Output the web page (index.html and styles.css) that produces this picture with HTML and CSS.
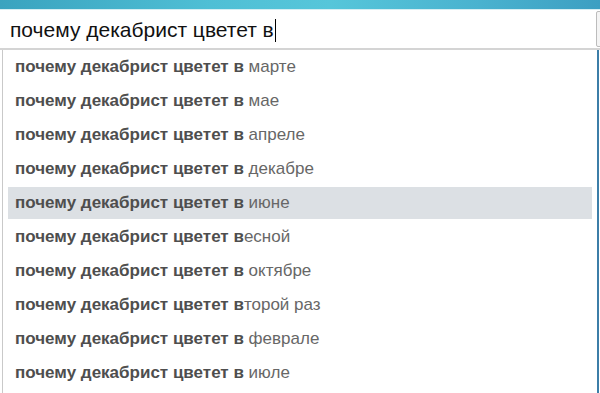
FILE: index.html
```html
<!DOCTYPE html>
<html lang="ru">
<head>
<meta charset="utf-8">
<link rel="stylesheet" href="styles.css">
</head>
<body>
<div class="topbar"></div>
<div class="search">
  <div class="query">почему декабрист цветет в<span class="caret"></span></div>
  <div class="btn"></div>
</div>
<div class="dropdown">
  <ul class="list">
    <li class="item"><b>почему декабрист цветет в</b> марте</li>
    <li class="item"><b>почему декабрист цветет в</b> мае</li>
    <li class="item"><b>почему декабрист цветет в</b> апреле</li>
    <li class="item"><b>почему декабрист цветет в</b> декабре</li>
    <li class="item active"><b>почему декабрист цветет в</b> июне</li>
    <li class="item"><b>почему декабрист цветет в</b>есной</li>
    <li class="item"><b>почему декабрист цветет в</b> октябре</li>
    <li class="item"><b>почему декабрист цветет в</b>торой раз</li>
    <li class="item"><b>почему декабрист цветет в</b> феврале</li>
    <li class="item"><b>почему декабрист цветет в</b> июле</li>
  </ul>
  <div class="edge"></div>
</div>
</body>
</html>
```

FILE: styles.css
```css
html, body {
  margin: 0;
  padding: 0;
  width: 600px;
  height: 393px;
  overflow: hidden;
  background: #fff;
  font-family: "Liberation Sans", Arial, sans-serif;
}
.topbar {
  height: 9px;
  background: linear-gradient(to right, #3aa3bf 0%, #4fbfd5 35%, #56c6da 55%, #49b2cf 80%, #3d9fc2 100%);
  border-bottom: 1px solid #d6eef3;
}
.search {
  height: 38px;
  display: flex;
  align-items: center;
  border-bottom: 2px solid #d4d4d4;
  background: #fff;
}
.query {
  padding-left: 10px;
  font-size: 21px;
  color: #111;
  display: flex;
  align-items: center;
  margin-top: 2px;
}
.caret {
  display: inline-block;
  width: 1px;
  height: 23px;
  background: #000;
  margin-left: 1px;
}
.btn {
  margin-left: auto;
  margin-right: -10px;
  width: 12px;
  height: 34px;
  border: 1px solid #bcbcbc;
  border-radius: 2px;
  background: #f4f4f4;
  flex: none;
}
.dropdown {
  display: flex;
  margin-left: 2px;
  border-left: 1px solid #c9c9c9;
  height: 343px;
}
.list {
  list-style: none;
  margin: 0;
  padding: 1px 5px 0 5px;
  width: 584px;
  flex: none;
}
.item {
  height: 32px;
  margin-bottom: 2px;
  line-height: 32px;
  padding-left: 7px;
  font-size: 17px;
  color: #676767;
  white-space: nowrap;
}
.item b {
  color: #4e4e4e;
}
.item.active {
  background: #dce0e4;
}
.edge {
  margin-left: auto;
  width: 2px;
  margin-right: 1px;
  background: #3c7ea8;
  flex: none;
}
```
